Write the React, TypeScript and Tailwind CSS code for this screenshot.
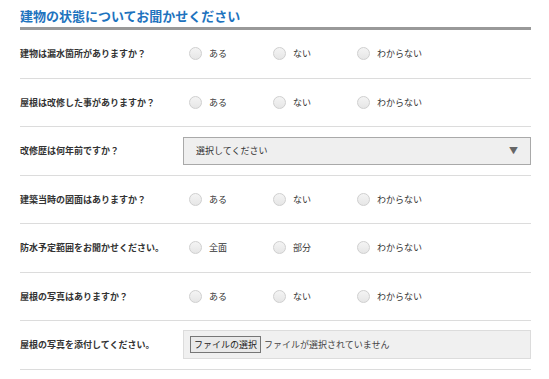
const font = {
  fontFamily: '"Noto Sans CJK JP", "Noto Sans", sans-serif',
};

function Radio({ label }: { label: string }) {
  return (
    <label className="flex items-center gap-[7px] w-[84px]">
      <span className="block w-[13px] h-[13px] rounded-full border border-[#cfcfcf] bg-gradient-to-b from-[#f4f4f4] to-[#e6e6e6]" />
      <span className="text-[9px] text-[#333]">{label}</span>
    </label>
  );
}

function Row({
  label,
  children,
}: {
  label: string;
  children: React.ReactNode;
}) {
  return (
    <div className="flex items-center border-b border-[#dcdcdc] h-[48.5px]">
      <div className="w-[163px] shrink-0 text-[9px] font-bold text-[#333]">
        {label}
      </div>
      <div className="flex-1 flex items-center">{children}</div>
    </div>
  );
}

function Radios({ options }: { options: string[] }) {
  return (
    <div className="flex items-center pl-[6px]">
      {options.map((o) => (
        <Radio key={o} label={o} />
      ))}
    </div>
  );
}

export default function App() {
  const yesNo = ["ある", "ない", "わからない"];
  return (
    <div className="w-[549px] h-[379px] bg-white overflow-hidden" style={font}>
      <div className="mx-[20px] w-[511px]">
        <h2 className="pt-[7px] pb-[3px] text-[13px] font-bold text-[#1e73be] border-b-[3px] border-[#999] leading-[17px]">
          建物の状態についてお聞かせください
        </h2>
        <Row label="建物は漏水箇所がありますか？">
          <Radios options={yesNo} />
        </Row>
        <Row label="屋根は改修した事がありますか？">
          <Radios options={yesNo} />
        </Row>
        <Row label="改修歴は何年前ですか？">
          <div className="flex-1 h-[28px] flex items-center justify-between bg-[#efefef] border border-[#a9a9a9] pl-[12px] pr-[12px]">
            <span className="text-[9px] text-[#333]">選択してください</span>
            <span className="text-[9px] text-[#666]">▼</span>
          </div>
        </Row>
        <Row label="建築当時の図面はありますか？">
          <Radios options={yesNo} />
        </Row>
        <Row label="防水予定範囲をお聞かせください。">
          <Radios options={["全面", "部分", "わからない"]} />
        </Row>
        <Row label="屋根の写真はありますか？">
          <Radios options={yesNo} />
        </Row>
        <Row label="屋根の写真を添付してください。">
          <div className="flex-1 h-[29px] flex items-center bg-[#f0f0f0] border border-[#dcdcdc] pl-[6px]">
            <span className="h-[17px] px-[3px] flex items-center border border-[#767676] bg-[#e9e9e9] text-[9px] text-[#222]">
              ファイルの選択
            </span>
            <span className="ml-[3px] text-[9px] text-[#444]">
              ファイルが選択されていません
            </span>
          </div>
        </Row>
      </div>
    </div>
  );
}
